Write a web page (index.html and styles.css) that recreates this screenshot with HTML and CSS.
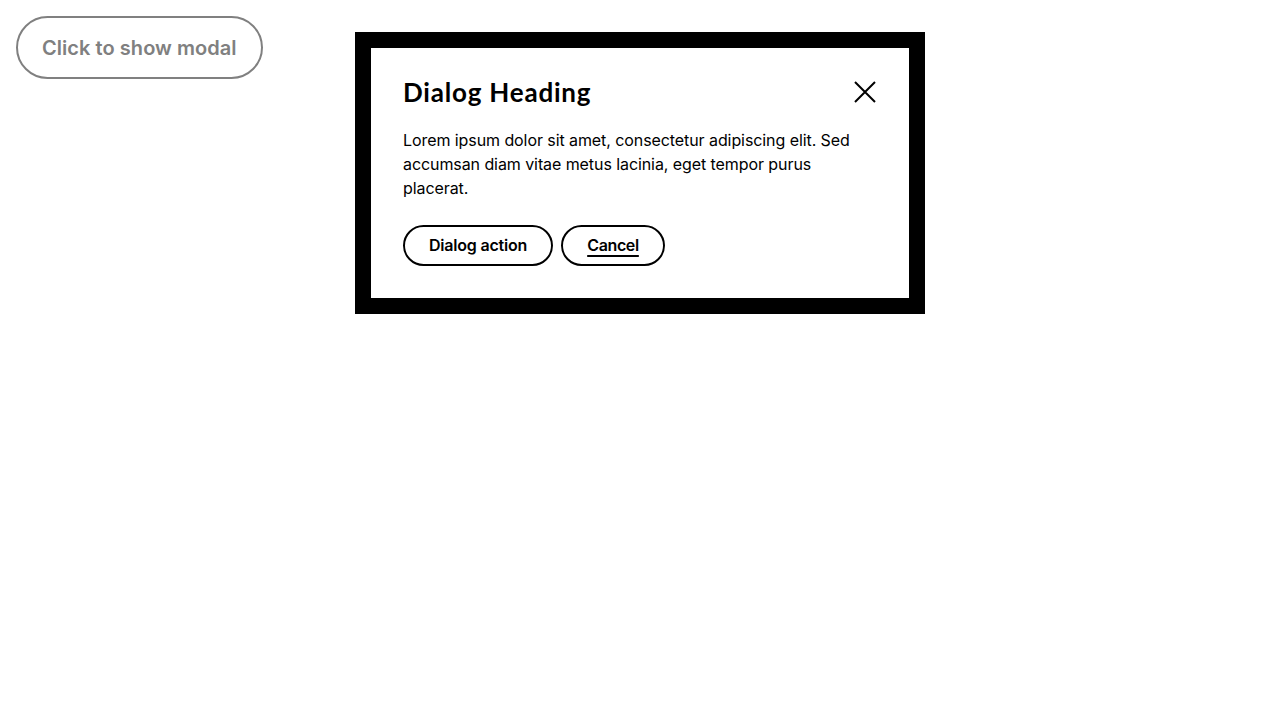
FILE: index.html
```html
<!DOCTYPE html>
<html lang="en">
<head>
<meta charset="utf-8">
<title>Dialog</title>
<link rel="stylesheet" href="styles.css">
</head>
<body>
  <button class="show-btn" type="button">Click to show modal</button>
  <div class="overlay">
    <div class="dialog" role="dialog" aria-labelledby="dlg-title">
      <div class="dialog-inner">
        <div class="dialog-head">
          <h2 id="dlg-title" class="dialog-title">Dialog Heading</h2>
          <button class="close-btn" type="button" aria-label="Close">
            <svg width="24" height="24" viewBox="0 0 24 24" aria-hidden="true"><path d="M2 2 L22 22 M22 2 L2 22" stroke="#000" stroke-width="2" fill="none"/></svg>
          </button>
        </div>
        <p class="dialog-text">Lorem ipsum dolor sit amet, consectetur adipiscing elit. Sed accumsan diam vitae metus lacinia, eget tempor purus placerat.</p>
        <div class="dialog-actions">
          <button class="pill" type="button">Dialog action</button>
          <button class="pill pill-link" type="button"><span>Cancel</span></button>
        </div>
      </div>
    </div>
  </div>
</body>
</html>
```

FILE: styles.css
```css
html, body {
  margin: 0;
  padding: 0;
  background: #fff;
  font-family: "Inter", "Liberation Sans", sans-serif;
}
body {
  padding: 16px;
  width: 1280px;
  height: 720px;
  box-sizing: border-box;
  position: relative;
}
.show-btn {
  display: block;
  height: 63px;
  padding: 0 24px;
  border: 2px solid #808080;
  border-radius: 32px;
  background: #fff;
  color: #808080;
  font-family: "Inter", "Liberation Sans", sans-serif;
  font-size: 20px;
  font-weight: 600;
  letter-spacing: 0.05px;
}
.overlay {
  position: absolute;
  top: 32px;
  left: 0;
  right: 0;
  display: flex;
  justify-content: center;
}
.dialog {
  width: 570px;
  border: 16px solid #000;
  box-sizing: border-box;
  background: #fff;
}
.dialog-inner {
  padding: 32px;
}
.dialog-head {
  display: flex;
  justify-content: space-between;
  align-items: center;
  height: 24px;
}
.dialog-title {
  margin: 0;
  font-family: "Lato", "Liberation Sans", sans-serif;
  font-size: 26px;
  font-weight: 700;
  line-height: 24px;
  letter-spacing: 0.8px;
  color: #000;
}
.close-btn {
  width: 24px;
  height: 24px;
  padding: 0;
  border: 0;
  background: none;
  display: flex;
}
.dialog-text {
  margin: 24px 0 0;
  font-size: 16px;
  line-height: 24px;
  letter-spacing: -0.08px;
  color: #000;
  max-width: 474px;
}
.dialog-actions {
  display: flex;
  gap: 8px;
  margin-top: 25px;
}
.pill {
  height: 41px;
  padding: 0 24px;
  border: 2px solid #000;
  border-radius: 21px;
  background: #fff;
  color: #000;
  font-family: "Inter", "Liberation Sans", sans-serif;
  font-size: 16px;
  font-weight: 600;
  letter-spacing: -0.2px;
  line-height: 20px;
  padding-bottom: 1px;
}
.pill-link {
  letter-spacing: -0.35px;
}
.pill-link span {
  text-decoration: underline;
  text-decoration-thickness: 2px;
  text-underline-offset: 4px;
}
```
